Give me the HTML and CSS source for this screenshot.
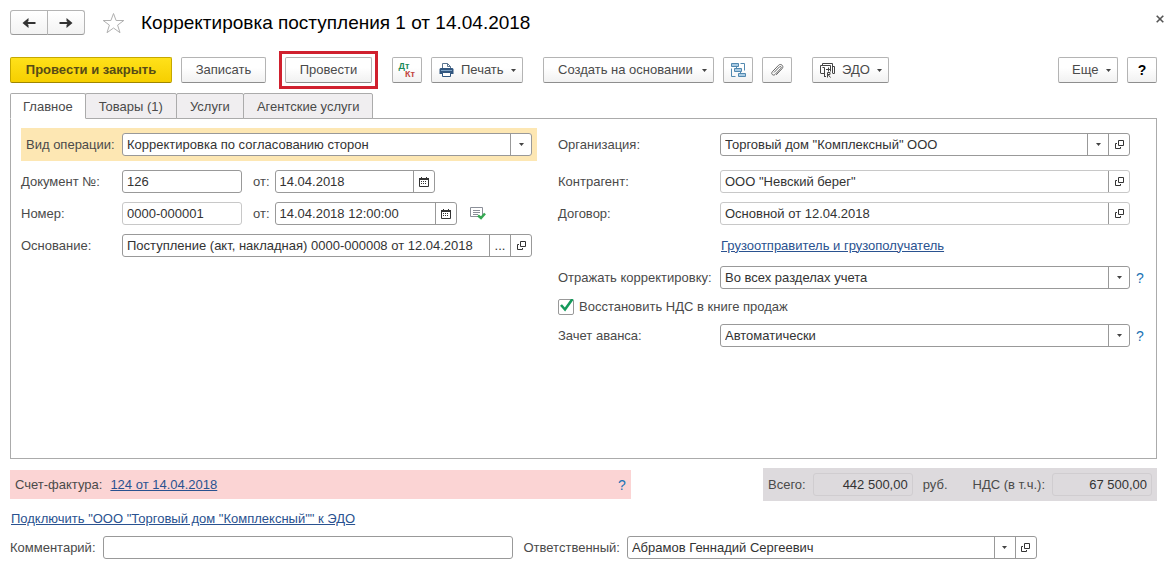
FILE: index.html
```
<!DOCTYPE html>
<html lang="ru">
<head>
<meta charset="utf-8">
<meta name="viewport" content="width=device-width, initial-scale=1">
<title>Корректировка поступления 1 от 14.04.2018</title>
<link rel="stylesheet" href="styles.css">
</head>
<body>
<svg class="sprite" aria-hidden="true">
  <symbol id="open" viewBox="0 0 11 11"><path d="M4.500 1.500h5v5h-5zM3 4.500H1.500v5h5V8" fill="none" stroke="currentColor"/></symbol>
  <symbol id="caret" viewBox="0 0 5 3"><path d="M0 0h5L2.500 3z" fill="currentColor"/></symbol>
  <symbol id="calendar" viewBox="0 0 10 10"><path d="M.5 1.500h9v8h-9z" fill="none" stroke="currentColor"/><path d="M0 1h10v2H0zM2 0h1v1H2zM7 0h1v1H7zM2 4h1v1H2zM4 4h1v1H4zM6 4h1v1H6zM2 6h1v1H2zM4 6h1v1H4zM6 6h1v1H6z" fill="currentColor"/></symbol>
</svg>
<main class="window">
  <header class="titlebar">
    <div class="nav">
      <button type="button" aria-label="Назад"><svg width="14" height="10" viewBox="0 0 14 10"><path d="M13.500 5H3" stroke="#333" stroke-width="2"/><path d="M6.500 0v3L4.500 5l2 2v3L.5 5z" fill="#333"/></svg></button>
      <button type="button" aria-label="Вперед"><svg width="14" height="10" viewBox="0 0 14 10"><path d="M.5 5H11" stroke="#333" stroke-width="2"/><path d="M7.500 0v3l2 2-2 2v3l6-5z" fill="#333"/></svg></button>
    </div>
    <button type="button" class="plain" aria-label="В избранное"><svg width="23" height="22" viewBox="0 0 23 22"><path d="M11.500 1.500l2.600 7h7.700l-6.200 4.600 2.400 7.600-6.500-4.700L5 20.700l2.400-7.600L1.200 8.500h7.700z" fill="none" stroke="#b0b0b0"/></svg></button>
    <h1>Корректировка поступления 1 от 14.04.2018</h1>
    <button type="button" class="plain close" aria-label="Закрыть"><svg width="8" height="8" viewBox="0 0 8 8"><path d="M.7.7l6.600 6.600M7.300.7L.7 7.300" stroke="#555" stroke-width="1.600"/></svg></button>
  </header>

  <div class="toolbar">
    <button type="button" class="btn primary">Провести и закрыть</button>
    <button type="button" class="btn save">Записать</button>
    <span class="marked"><button type="button" class="btn post">Провести</button></span>
    <button type="button" class="btn icon dtkt" aria-label="Дт Кт"><span class="dt">Дт</span><span class="kt">Кт</span></button>
    <button type="button" class="btn menu print"><svg width="15" height="15" viewBox="0 0 15 15"><path d="M3.500 6V.5h5l3 3V6M8.500.5v3h3" fill="#fff" stroke="#5b7590"/><path d="M1.500 5h12l1 1v5h-14V6z" fill="#31567f"/><path d="M2 7.500h11" stroke="#7fa3c6"/><path d="M3.500 9.500h8v4h-8z" fill="#fff" stroke="#31567f"/></svg>Печать<svg class="caret"><use href="#caret"/></svg></button>
    <button type="button" class="btn menu create">Создать на основании<svg class="caret"><use href="#caret"/></svg></button>
    <button type="button" class="btn icon" aria-label="Структура подчиненности"><svg width="15" height="15" viewBox="0 0 15 15"><path d="M.5.5h7v3h-7zM3.500 5.500h7v3h-7zM7.500 10.500h7v3h-7z" fill="#a9cbe3" stroke="#5289b0"/><path d="M9.500 .5h4v7M.5 5.500v8h4M5.500 3.500v2M9.500 8.500v2" fill="none" stroke="#5289b0"/></svg></button>
    <button type="button" class="btn icon clip" aria-label="Файлы"><svg width="14" height="14" viewBox="0 0 14 14"><path d="M4 9.500l5.500-5.700c1-1 2.400.3 1.500 1.400l-6 6.300c-1.700 1.700-4.500-.6-2.700-2.700L8.500 2.300c2.300-2.300 5.800.7 3.700 3.200l-6 6.400" fill="none" stroke="#666"/></svg></button>
    <button type="button" class="btn menu edo"><svg width="15" height="15" viewBox="0 0 15 15"><g fill="none" stroke="#444"><path d="M2.500 3V.5h10V10M.5 10V2.500h10v6M.5 10.500H4M4.500 14V4.500h-2M12.500 3.500h2v7h-2M4.500 13.500H6M6 6.500h4M8.500 4.500v4"/><path d="M7.500 14.500V9.500h2.500v2H8l2.500 3"/></g></svg>ЭДО<svg class="caret"><use href="#caret"/></svg></button>
    <button type="button" class="btn menu more">Еще<svg class="caret"><use href="#caret"/></svg></button>
    <button type="button" class="btn icon help-btn">?</button>
  </div>

  <div class="tabs" role="tablist">
    <button type="button" role="tab" class="tab active" aria-selected="true">Главное</button>
    <button type="button" role="tab" class="tab" aria-selected="false">Товары (1)</button>
    <button type="button" role="tab" class="tab" aria-selected="false">Услуги</button>
    <button type="button" role="tab" class="tab" aria-selected="false">Агентские услуги</button>
  </div>

  <section class="panel">
    <div class="column left">
      <div class="row operation">
        <label for="op">Вид операции:</label>
        <div class="field combo"><select id="op"><option>Корректировка по согласованию сторон</option></select><span class="drop"><svg class="caret"><use href="#caret"/></svg></span></div>
      </div>
      <div class="row">
        <label for="doc">Документ №:</label>
        <div class="field number"><input id="doc" type="text" value="126"></div>
        <label class="from" for="docdate">от:</label>
        <div class="field date"><input id="docdate" type="text" value="14.04.2018"><button type="button" aria-label="Выбрать дату"><svg width="10" height="10"><use href="#calendar"/></svg></button></div>
      </div>
      <div class="row">
        <label for="num">Номер:</label>
        <div class="field number muted"><input id="num" type="text" value="0000-000001"></div>
        <label class="from" for="numdate">от:</label>
        <div class="field datetime"><input id="numdate" type="text" value="14.04.2018 12:00:00"><button type="button" aria-label="Выбрать дату"><svg width="10" height="10"><use href="#calendar"/></svg></button></div>
        <svg class="posted" width="16" height="13" viewBox="0 0 16 13"><path d="M.5.5h12v9H.5z" fill="#fff" stroke="#8b8f98"/><path d="M3 3.500h7M3 5.500h7M3 7.500h5" stroke="#8b8f98"/><path d="M8 8.500l3 2.500 4-4.500" fill="none" stroke="#36a852" stroke-width="2.500"/></svg>
      </div>
      <div class="row">
        <label for="base">Основание:</label>
        <div class="field base"><input id="base" type="text" value="Поступление (акт, накладная) 0000-000008 от 12.04.2018"><button type="button" aria-label="Выбрать">...</button><button type="button" aria-label="Открыть"><svg width="11" height="11"><use href="#open"/></svg></button></div>
      </div>
    </div>

    <div class="column right">
      <div class="row first">
        <label for="org">Организация:</label>
        <div class="field"><div class="combo"><select id="org"><option>Торговый дом "Комплексный" ООО</option></select><span class="drop"><svg class="caret"><use href="#caret"/></svg></span></div><button type="button" aria-label="Открыть"><svg width="11" height="11"><use href="#open"/></svg></button></div>
      </div>
      <div class="row">
        <label for="partner">Контрагент:</label>
        <div class="field muted"><input id="partner" type="text" value="ООО &quot;Невский берег&quot;"><button type="button" aria-label="Открыть"><svg width="11" height="11"><use href="#open"/></svg></button></div>
      </div>
      <div class="row">
        <label for="contract">Договор:</label>
        <div class="field muted"><input id="contract" type="text" value="Основной от 12.04.2018"><button type="button" aria-label="Открыть"><svg width="11" height="11"><use href="#open"/></svg></button></div>
      </div>
      <div class="row"><a class="indent" href="#">Грузоотправитель и грузополучатель</a></div>
      <div class="row">
        <label for="reflect">Отражать корректировку:</label>
        <div class="field combo"><select id="reflect"><option>Во всех разделах учета</option></select><span class="drop"><svg class="caret"><use href="#caret"/></svg></span></div>
        <button type="button" class="plain hint">?</button>
      </div>
      <div class="check-row">
        <span class="check"><input id="vat" type="checkbox" checked><svg width="16" height="16" viewBox="0 0 16 16"><path d="M3 6l4 4.500L14.500 0" fill="none" stroke="#159a5b" stroke-width="2.600"/></svg></span>
        <label for="vat">Восстановить НДС в книге продаж</label>
      </div>
      <div class="row">
        <label for="advance">Зачет аванса:</label>
        <div class="field combo"><select id="advance"><option>Автоматически</option></select><span class="drop"><svg class="caret"><use href="#caret"/></svg></span></div>
        <button type="button" class="plain hint">?</button>
      </div>
    </div>
  </section>

  <div class="summary">
    <div class="invoice">
      <span>Счет-фактура:</span><a href="#">124 от 14.04.2018</a>
      <button type="button" class="plain hint">?</button>
    </div>
    <div class="totals">
      <label for="total">Всего:</label>
      <div class="field sum"><input id="total" type="text" value="442 500,00" readonly></div>
      <span class="currency">руб.</span>
      <label for="nds">НДС (в т.ч.):</label>
      <div class="field sum"><input id="nds" type="text" value="67 500,00" readonly></div>
    </div>
  </div>

  <div class="connect"><a href="#">Подключить "ООО "Торговый дом "Комплексный"" к ЭДО</a></div>

  <footer class="footer">
    <label for="comment">Комментарий:</label>
    <div class="field"><input id="comment" type="text"></div>
    <label for="resp">Ответственный:</label>
    <div class="field"><div class="combo"><select id="resp"><option>Абрамов Геннадий Сергеевич</option></select><span class="drop"><svg class="caret"><use href="#caret"/></svg></span></div><button type="button" aria-label="Открыть"><svg width="11" height="11"><use href="#open"/></svg></button></div>
  </footer>
</main>
</body>
</html>
```

FILE: styles.css
```
* { box-sizing: border-box; }

body {
  margin: 0;
  background: #fff;
  color: #4a4a4a;
  font: 13px/16px "Liberation Sans", Arial, sans-serif;
}

button, input, select { font: inherit; color: inherit; margin: 0; }
button { cursor: pointer; }
svg { display: block; flex: none; }
a { color: #2a5290; text-decoration: underline; }

.sprite { position: absolute; width: 0; height: 0; }
.caret { width: 5px; height: 3px; color: #444; }
.window { padding: 10px 17px 8px 10px; }
.plain { border: 0; padding: 0; background: none; }

/* Title */
.titlebar { display: flex; align-items: center; height: 25px; }
.nav { display: flex; margin-right: 17px; }
.nav button {
  display: flex;
  align-items: center;
  justify-content: center;
  width: 38px;
  height: 25px;
  padding: 0;
  border: 1px solid #b4b4b4;
  border-bottom-color: #999;
  border-radius: 3px 0 0 3px;
  background: linear-gradient(#fff, #f3f3f3);
}
.nav button + button { margin-left: -1px; border-radius: 0 3px 3px 0; }
.titlebar h1 {
  margin: 0 0 0 16px;
  color: #000;
  font-size: 19px;
  font-weight: 400;
  line-height: 24px;
}
.close { margin: -8px -7px 0 auto; }

/* Commands */
.toolbar { display: flex; align-items: center; margin-top: 16px; height: 38px; }
.btn {
  display: flex;
  align-items: center;
  justify-content: center;
  height: 26px;
  padding: 0;
  border: 1px solid #b4b4b4;
  border-bottom-color: #8e8e8e;
  border-radius: 2px;
  background: linear-gradient(#fff 40%, #f1f1f1);
  white-space: nowrap;
}
.primary {
  width: 162px;
  border-color: #c5a800 #c5a800 #9f8600;
  background: linear-gradient(#ffe11a, #f6cf00);
  color: #574b16;
  font-weight: 700;
}
.save { width: 85px; margin-left: 9px; }
.marked { margin-left: 13px; padding: 3px; border: 3px solid #d0202e; }
.post { width: 87px; }
.icon { width: 30px; margin-left: 9px; }
.marked + .icon { margin-left: 14px; }
.menu { justify-content: flex-start; gap: 7px; padding: 0 6px 0 7px; }
.menu .caret { margin-left: auto; }
.print { width: 92px; margin-left: 9px; }
.create { width: 171px; margin-left: 20px; padding-left: 14px; }
.edo { width: 77px; margin-left: 20px; }
.more { width: 60px; margin-left: auto; padding-left: 13px; }
.help-btn { color: #000; font-size: 14px; font-weight: 700; }
.dtkt { flex-direction: column; font-size: 9px; font-weight: 700; line-height: 8px; }
.dt { margin-right: 6px; color: #1b8a5a; }
.kt { margin-left: 6px; color: #c2453f; }

/* Tabs */
.tabs { display: flex; margin-top: 4px; }
.tab {
  height: 26px;
  padding: 2px 13px 0;
  border: 1px solid #ababab;
  border-radius: 2px 2px 0 0;
  background: #f0eef0;
  white-space: nowrap;
}
.tab + .tab { margin-left: -1px; }
.tab.active {
  position: relative;
  padding: 2px 12px 0;
  border-bottom-color: #fff;
  background: #fff;
}

/* Form */
.panel {
  display: grid;
  grid-template-columns: minmax(0, 516fr) minmax(0, 589fr);
  gap: 21px;
  min-height: 341px;
  margin-top: -1px;
  padding: 9px 9px 9px 10px;
  border: 1px solid #ababab;
}
.column { display: flex; flex-direction: column; gap: 9px; }
.row { display: flex; align-items: center; min-height: 23px; }
.left .row > label:first-child { flex: none; width: 101px; }
.left .row { padding-right: 5px; }
.left .operation { padding: 5px; background: #fde7b3; }
.left .operation > label:first-child { width: 96px; }
.right .first { min-height: 33px; }
.right .row > label { flex: none; width: 162px; white-space: nowrap; }
.right .row > .field { flex: 1; margin-right: 17px; }
.right .row > .field:has(+ .hint) { margin-right: 6px; }
.indent { margin-left: 163px; }
.hint { width: 11px; color: #1c73b4; font-size: 14px; text-align: left; }

.field {
  display: flex;
  min-width: 0;
  height: 23px;
  border: 1px solid #999;
  border-radius: 3px;
  background: #fff;
  color: #333;
  overflow: hidden;
}
.field input, .field select {
  flex: 1;
  width: 100%;
  min-width: 0;
  padding: 0 4px;
  border: 0;
  outline: 0;
  background: transparent;
  appearance: none;
}
.field button {
  display: flex;
  flex: none;
  align-items: center;
  justify-content: center;
  width: 21px;
  padding: 0;
  border: 0;
  border-left: 1px solid #999;
  background: none;
}
.muted { border-color: #c8c8c8; }
.combo { display: grid; flex: 1; grid-template-columns: minmax(0, 1fr) 21px; }
.combo select { grid-area: 1 / 1 / 2 / 3; height: 21px; }
.drop {
  display: grid;
  grid-area: 1 / 2;
  place-items: center;
  border-left: 1px solid #999;
  pointer-events: none;
}
.number { width: 120px; }
.from { margin: 0 5px 0 11px; }
.date { width: 160px; }
.datetime { width: 182px; }
.base { flex: 1; }
.posted { margin-left: 13px; }

.check-row { display: flex; align-items: center; gap: 5px; height: 17px; }
.check { display: grid; }
.check input {
  grid-area: 1 / 1;
  width: 16px;
  height: 16px;
  border: 1px solid #999;
  border-radius: 2px;
  background: #fff;
  appearance: none;
}
.check svg { grid-area: 1 / 1; visibility: hidden; pointer-events: none; }
.check input:checked + svg { visibility: visible; }

/* Summary */
.summary { display: flex; align-items: center; justify-content: space-between; margin-top: 9px; }
.invoice {
  display: flex;
  align-items: center;
  gap: 8px;
  flex: 0 1 621px;
  height: 29px;
  padding: 0 2px 0 5px;
  background: #fbd4d4;
}
.invoice .hint { margin-left: auto; }
.totals {
  display: flex;
  align-items: center;
  height: 33px;
  padding: 5px;
  background: #dddadd;
  white-space: nowrap;
}
.sum { width: 100px; margin-left: 7px; border-color: #d0cdd0; background: transparent; }
.sum input { text-align: right; }
.currency { margin: 0 25px 0 10px; }

.connect { margin-top: 10px; padding-left: 1px; }
.footer {
  display: grid;
  grid-template-columns: auto minmax(0, 410px) auto minmax(0, 410px);
  align-items: center;
  justify-content: start;
  margin-top: 9px;
}
.footer label { padding-right: 7px; white-space: nowrap; }
.footer .field + label { padding-left: 11px; }
```
